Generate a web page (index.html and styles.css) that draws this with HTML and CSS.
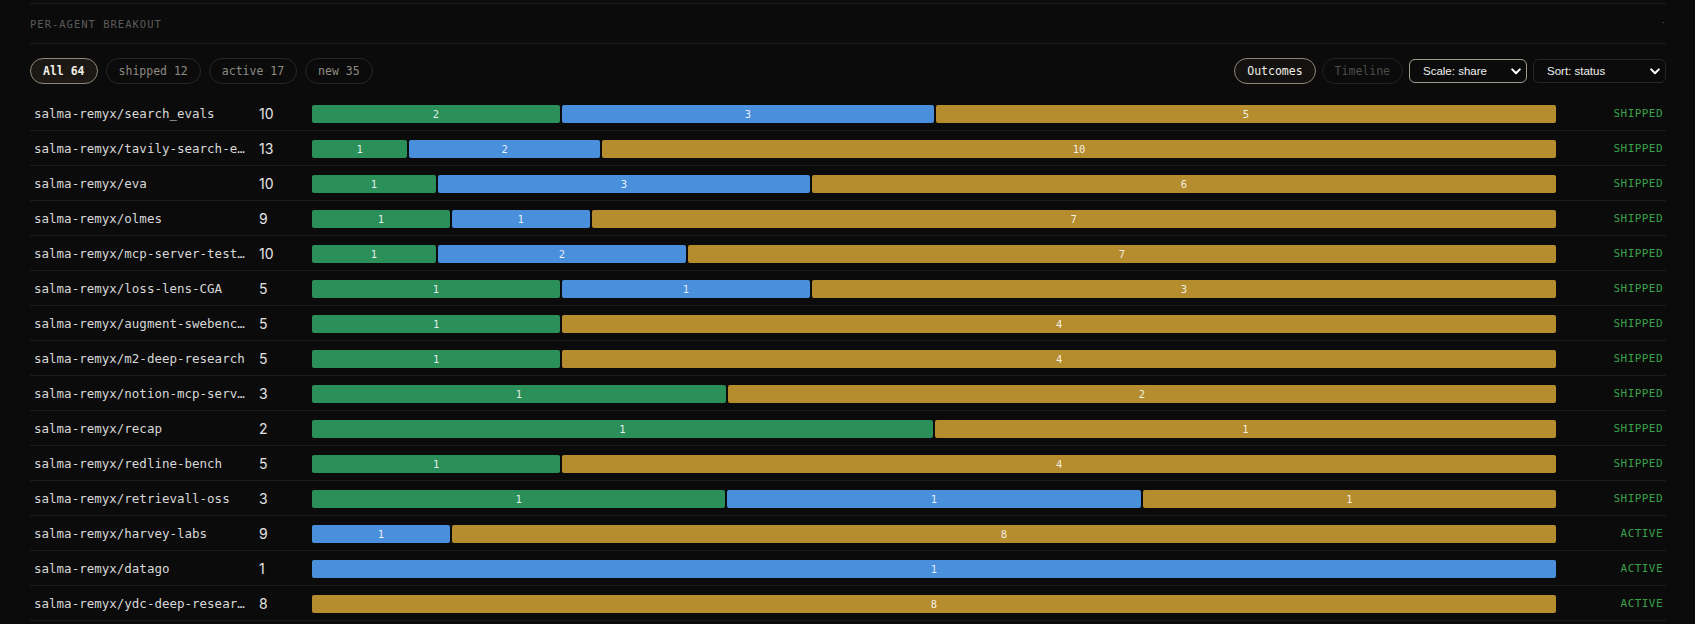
FILE: index.html
```html
<!DOCTYPE html>
<html lang="en">
<head>
<meta charset="utf-8">
<title>Per-agent breakout</title>
<link rel="stylesheet" href="styles.css">
</head>
<body>
<section class="panel">
  <header class="panel-head">
    <h2 class="panel-title">PER-AGENT BREAKOUT</h2>
    <span class="panel-mark">·</span>
  </header>

  <div class="toolbar">
    <div class="filters">
      <button class="pill is-on">All 64</button>
      <button class="pill">shipped 12</button>
      <button class="pill">active 17</button>
      <button class="pill">new 35</button>
    </div>
    <div class="controls">
      <button class="pill is-on">Outcomes</button>
      <button class="pill is-muted">Timeline</button>
      <div class="select-wrap select-scale is-on">
        <select class="select"><option>Scale: share</option><option>Scale: count</option></select>
        <svg class="chev" width="10" height="7" viewBox="0 0 10 7"><path d="M1.2 1.4 5 5.2 8.8 1.4" fill="none" stroke="#fff" stroke-width="2" stroke-linecap="round" stroke-linejoin="round"/></svg>
      </div>
      <div class="select-wrap select-sort">
        <select class="select"><option>Sort: status</option><option>Sort: total</option></select>
        <svg class="chev" width="10" height="7" viewBox="0 0 10 7"><path d="M1.2 1.4 5 5.2 8.8 1.4" fill="none" stroke="#fff" stroke-width="2" stroke-linecap="round" stroke-linejoin="round"/></svg>
      </div>
    </div>
  </div>

  <ul class="rows">
    <li class="row">
      <span class="name">salma-remyx/search_evals</span><span class="count">10</span>
      <div class="bar"><span class="seg seg-shipped" style="flex-grow:2">2</span><span class="seg seg-active" style="flex-grow:3">3</span><span class="seg seg-new" style="flex-grow:5">5</span></div>
      <span class="status">SHIPPED</span>
    </li>
    <li class="row">
      <span class="name" title="salma-remyx/tavily-search-evals">salma-remyx/tavily-search-evals</span><span class="count">13</span>
      <div class="bar"><span class="seg seg-shipped" style="flex-grow:1">1</span><span class="seg seg-active" style="flex-grow:2">2</span><span class="seg seg-new" style="flex-grow:10">10</span></div>
      <span class="status">SHIPPED</span>
    </li>
    <li class="row">
      <span class="name">salma-remyx/eva</span><span class="count">10</span>
      <div class="bar"><span class="seg seg-shipped" style="flex-grow:1">1</span><span class="seg seg-active" style="flex-grow:3">3</span><span class="seg seg-new" style="flex-grow:6">6</span></div>
      <span class="status">SHIPPED</span>
    </li>
    <li class="row">
      <span class="name">salma-remyx/olmes</span><span class="count">9</span>
      <div class="bar"><span class="seg seg-shipped" style="flex-grow:1">1</span><span class="seg seg-active" style="flex-grow:1">1</span><span class="seg seg-new" style="flex-grow:7">7</span></div>
      <span class="status">SHIPPED</span>
    </li>
    <li class="row">
      <span class="name" title="salma-remyx/mcp-server-testing">salma-remyx/mcp-server-testing</span><span class="count">10</span>
      <div class="bar"><span class="seg seg-shipped" style="flex-grow:1">1</span><span class="seg seg-active" style="flex-grow:2">2</span><span class="seg seg-new" style="flex-grow:7">7</span></div>
      <span class="status">SHIPPED</span>
    </li>
    <li class="row">
      <span class="name">salma-remyx/loss-lens-CGA</span><span class="count">5</span>
      <div class="bar"><span class="seg seg-shipped" style="flex-grow:1">1</span><span class="seg seg-active" style="flex-grow:1">1</span><span class="seg seg-new" style="flex-grow:3">3</span></div>
      <span class="status">SHIPPED</span>
    </li>
    <li class="row">
      <span class="name" title="salma-remyx/augment-swebench-agent">salma-remyx/augment-swebench-agent</span><span class="count">5</span>
      <div class="bar"><span class="seg seg-shipped" style="flex-grow:1">1</span><span class="seg seg-new" style="flex-grow:4">4</span></div>
      <span class="status">SHIPPED</span>
    </li>
    <li class="row">
      <span class="name">salma-remyx/m2-deep-research</span><span class="count">5</span>
      <div class="bar"><span class="seg seg-shipped" style="flex-grow:1">1</span><span class="seg seg-new" style="flex-grow:4">4</span></div>
      <span class="status">SHIPPED</span>
    </li>
    <li class="row">
      <span class="name" title="salma-remyx/notion-mcp-server">salma-remyx/notion-mcp-server</span><span class="count">3</span>
      <div class="bar"><span class="seg seg-shipped" style="flex-grow:1">1</span><span class="seg seg-new" style="flex-grow:2">2</span></div>
      <span class="status">SHIPPED</span>
    </li>
    <li class="row">
      <span class="name">salma-remyx/recap</span><span class="count">2</span>
      <div class="bar"><span class="seg seg-shipped" style="flex-grow:1">1</span><span class="seg seg-new" style="flex-grow:1">1</span></div>
      <span class="status">SHIPPED</span>
    </li>
    <li class="row">
      <span class="name">salma-remyx/redline-bench</span><span class="count">5</span>
      <div class="bar"><span class="seg seg-shipped" style="flex-grow:1">1</span><span class="seg seg-new" style="flex-grow:4">4</span></div>
      <span class="status">SHIPPED</span>
    </li>
    <li class="row">
      <span class="name">salma-remyx/retrievall-oss</span><span class="count">3</span>
      <div class="bar"><span class="seg seg-shipped" style="flex-grow:1">1</span><span class="seg seg-active" style="flex-grow:1">1</span><span class="seg seg-new" style="flex-grow:1">1</span></div>
      <span class="status">SHIPPED</span>
    </li>
    <li class="row">
      <span class="name">salma-remyx/harvey-labs</span><span class="count">9</span>
      <div class="bar"><span class="seg seg-active" style="flex-grow:1">1</span><span class="seg seg-new" style="flex-grow:8">8</span></div>
      <span class="status">ACTIVE</span>
    </li>
    <li class="row">
      <span class="name">salma-remyx/datago</span><span class="count">1</span>
      <div class="bar"><span class="seg seg-active" style="flex-grow:1">1</span></div>
      <span class="status">ACTIVE</span>
    </li>
    <li class="row">
      <span class="name" title="salma-remyx/ydc-deep-research">salma-remyx/ydc-deep-research</span><span class="count">8</span>
      <div class="bar"><span class="seg seg-new" style="flex-grow:8">8</span></div>
      <span class="status">ACTIVE</span>
    </li>
  </ul>
</section>
</body>
</html>
```

FILE: styles.css
```css
* {
  box-sizing: border-box;
}

html,
body {
  margin: 0;
  background: #0b0b0b;
}

body {
  color: #d6d6d6;
  font-family: "DejaVu Sans Mono", "Liberation Mono", monospace;
  overflow: hidden;
}

.panel {
  margin: 0 29px 0 30px;
  padding-top: 3px;
}

/* section heading between two hairlines */
.panel-head {
  height: 41px;
  border-top: 1px solid #1f1d1a;
  border-bottom: 1px solid #1f1d1a;
  display: flex;
  align-items: center;
  justify-content: space-between;
}

.panel-title {
  margin: 0;
  font-size: 10.5px;
  font-weight: normal;
  letter-spacing: 1px;
  color: #5b5b5b;
}

.panel-mark {
  font-size: 9px;
  color: #4a4a4a;
  line-height: 1;
}

/* filter pills + view controls */
.toolbar {
  margin: 14px 0 12px;
  height: 26px;
  display: flex;
  align-items: center;
  justify-content: space-between;
}

.filters {
  display: flex;
  gap: 8px;
}

.controls {
  display: flex;
  align-items: center;
  gap: 6px;
}

.pill {
  height: 26px;
  padding: 0 12px;
  border: 1px solid #2b2720;
  border-radius: 13px;
  background: transparent;
  color: #8e8a84;
  font-family: "DejaVu Sans Mono", "Liberation Mono", monospace;
  font-size: 11.5px;
  line-height: 24px;
  cursor: pointer;
}

.pill.is-on {
  background: #1c1915;
  border-color: #8f8678;
  color: #f2eee8;
  font-weight: bold;
}

.controls .pill.is-on {
  font-weight: normal;
  background: #141210;
}

.pill.is-muted {
  color: #4e4c49;
  border-color: #24211d;
}

.select-wrap {
  position: relative;
  height: 24px;
}

.select-scale {
  width: 118px;
}

.select-sort {
  width: 133px;
}

.select {
  appearance: none;
  -webkit-appearance: none;
  width: 100%;
  height: 24px;
  padding: 0 0 0 13px;
  border: 1px solid #2b2620;
  border-radius: 6px;
  background: #0b0b0b;
  color: #f0f0f0;
  font-family: "Liberation Sans", Arial, sans-serif;
  font-size: 11.5px;
}

.select-wrap.is-on .select {
  border-color: #a59c8f;
}

.chev {
  position: absolute;
  right: 6px;
  top: 9px;
  pointer-events: none;
}

/* agent rows */
.rows {
  list-style: none;
  margin: 0;
  padding: 0;
}

.row {
  height: 35px;
  padding: 1px 4px 0;
  border-bottom: 1px solid #1e1c19;
  display: grid;
  grid-template-columns: 216px 44px 1fr 97px;
  column-gap: 9px;
  align-items: center;
}

.name {
  font-size: 12.5px;
  color: #d8d8d8;
  white-space: nowrap;
  overflow: hidden;
  text-overflow: ellipsis;
}

.count {
  font-family: Inter, "Noto Sans", sans-serif;
  font-size: 14px;
  color: #e4e4e4;
}

.bar {
  display: flex;
  gap: 2px;
  height: 18px;
}

.seg {
  flex-basis: 0;
  min-width: 0;
  border-radius: 2px;
  display: flex;
  align-items: center;
  justify-content: center;
  font-size: 10.5px;
  color: rgba(255, 255, 255, 0.88);
}

.seg-shipped {
  background: #2b8f5a;
}

.seg-active {
  background: #4a8fdb;
}

.seg-new {
  background: #b58c2e;
}

.status {
  text-align: right;
  font-size: 11px;
  letter-spacing: 0.45px;
  color: #3aa14a;
  margin-right: -1px;
}
```
